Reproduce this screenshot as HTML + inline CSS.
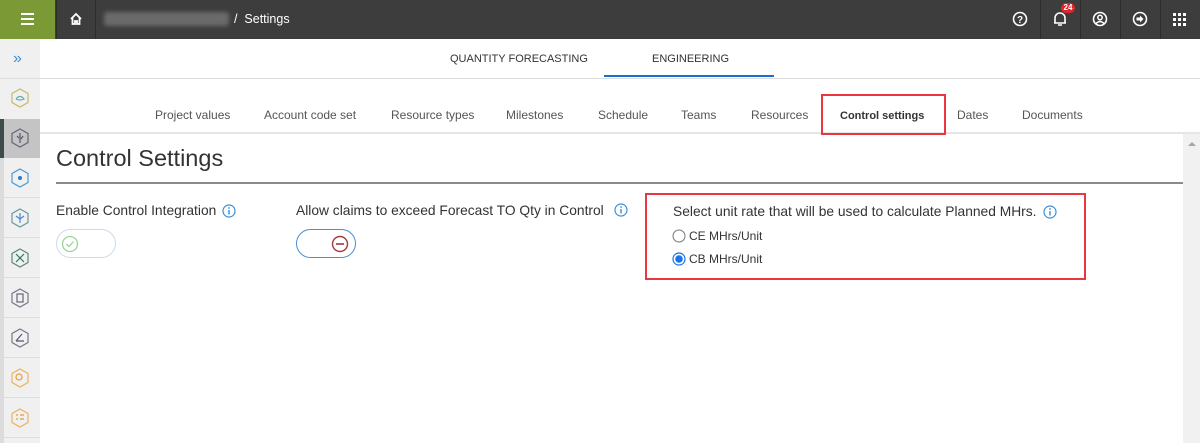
<!DOCTYPE html>
<html><head><style>
*{margin:0;padding:0;box-sizing:border-box}
body{width:1200px;height:443px;overflow:hidden;background:#fff;font-family:"Liberation Sans",Arial,sans-serif;position:relative}
.a{position:absolute}
.top{left:0;top:0;width:1200px;height:39px;background:#3d3d3d}
.t{color:#444;font-size:12px;white-space:nowrap}
.tab{top:108px;font-size:12px;color:#555}
</style></head><body>
<div class="a top"></div>
<div class="a" style="left:0;top:0;width:55px;height:39px;background:#7b9a36"></div>
<div class="a" style="left:21px;top:13px;width:13px;height:2px;background:#fff;box-shadow:0 5px #fff,0 10px #fff"></div>
<div class="a" style="left:56px;top:0;width:40px;height:39px;border-left:1px solid #2c2c2c;border-right:1px solid #2c2c2c"></div>
<svg class="a" style="left:69px;top:12px" width="14" height="14" viewBox="0 0 14 14"><path d="M2 7 L7 2 L12 7 M3.5 6 V12 H6 V9 H8 V12 H10.5 V6" fill="none" stroke="#fff" stroke-width="1.8"/></svg>
<div class="a" style="left:104px;top:12px;width:125px;height:14px;background:#6a6a6a;border-radius:3px;filter:blur(2px)"></div>
<div class="a" style="left:234px;top:12px;color:#fff;font-size:12.5px">/&nbsp;&nbsp;Settings</div>
<div class="a" style="left:1040px;top:0;width:1px;height:39px;background:#2c2c2c;box-shadow:40px 0 #2c2c2c,80px 0 #2c2c2c,120px 0 #2c2c2c"></div>
<svg class="a" style="left:1012px;top:11px" width="16" height="16"><circle cx="8" cy="8" r="6.5" fill="none" stroke="#fff" stroke-width="1.6"/><text x="8" y="12" font-size="10" font-weight="bold" fill="#fff" text-anchor="middle" font-family="Liberation Sans">?</text></svg>
<svg class="a" style="left:1052px;top:10px" width="16" height="18"><path d="M3 13 V8 A5 5 0 0 1 13 8 V13 H2 H14 M6 15 H10" fill="none" stroke="#fff" stroke-width="1.6"/></svg>
<div class="a" style="left:1061px;top:3px;width:14px;height:10px;background:#e5222a;border-radius:5px;color:#fff;font-size:8px;font-weight:bold;text-align:center;line-height:10px">24</div>
<svg class="a" style="left:1092px;top:11px" width="16" height="16"><circle cx="8" cy="8" r="6.5" fill="none" stroke="#fff" stroke-width="1.6"/><circle cx="8" cy="6.5" r="2.2" fill="none" stroke="#fff" stroke-width="1.5"/><path d="M4 12.5 Q8 8.5 12 12.5" fill="none" stroke="#fff" stroke-width="1.5"/></svg>
<svg class="a" style="left:1132px;top:11px" width="16" height="16"><circle cx="8" cy="8" r="6.5" fill="none" stroke="#fff" stroke-width="1.6"/><path d="M4.5 6.5 H8 V4.5 L11.5 8 L8 11.5 V9.5 H4.5Z" fill="#fff"/></svg>
<svg class="a" style="left:1173px;top:13px" width="13" height="13" fill="#fff"><rect x="0" y="0" width="3" height="3"/><rect x="5" y="0" width="3" height="3"/><rect x="10" y="0" width="3" height="3"/><rect x="0" y="5" width="3" height="3"/><rect x="5" y="5" width="3" height="3"/><rect x="10" y="5" width="3" height="3"/><rect x="0" y="10" width="3" height="3"/><rect x="5" y="10" width="3" height="3"/><rect x="10" y="10" width="3" height="3"/></svg>

<div class="a" style="left:0;top:39px;width:40px;height:404px;background:#f0f0f0"></div>
<div class="a" style="left:0;top:119px;width:4px;height:324px;background:#dcdcdc"></div>
<div class="a t" style="left:13px;top:50px;color:#3b8fd8;font-size:16px">»</div>
<div class="a" style="left:0;top:78px;width:40px;height:1px;background:#ddd"></div>
<div class="a" style="left:0;top:119px;width:40px;height:39px;background:#c4c4c4"></div>
<div class="a" style="left:0;top:119px;width:4px;height:39px;background:#3e4b4b"></div>
<svg class="a" style="left:0;top:79px" width="40" height="364">
<g fill="none" stroke-width="1.2">
<path d="M20 10 L28 14.5 V23.5 L20 28 L12 23.5 V14.5Z" stroke="#c8b86a"/><path d="M16 20 Q20 15 24 20 Q20 22 16 20" stroke="#6aa"/>
<path d="M20 50 L28 54.5 V63.5 L20 68 L12 63.5 V54.5Z" stroke="#667"/><path d="M20 54 V64 M17 57 L19 59 M23 57 L21 60" stroke="#557"/>
<path d="M20 90 L28 94.5 V103.5 L20 108 L12 103.5 V94.5Z" stroke="#4a9ad8"/><circle cx="20" cy="99" r="2" fill="#2a7ac8" stroke="none"/>
<path d="M20 130 L28 134.5 V143.5 L20 148 L12 143.5 V134.5Z" stroke="#6a9a9a"/><path d="M20 134 V144 M16 137 L20 140 L24 137" stroke="#4a8ac8"/>
<path d="M20 170 L28 174.5 V183.5 L20 188 L12 183.5 V174.5Z" stroke="#5a8a7a"/><path d="M16 175 L24 183 M24 175 L16 183" stroke="#2a7a5a"/>
<path d="M20 210 L28 214.5 V223.5 L20 228 L12 223.5 V214.5Z" stroke="#778"/><rect x="17" y="215" width="6" height="8" stroke="#667"/>
<path d="M20 250 L28 254.5 V263.5 L20 268 L12 263.5 V254.5Z" stroke="#778"/><path d="M16 262 H24 M16 262 L22 255" stroke="#557"/>
<path d="M20 290 L28 294.5 V303.5 L20 308 L12 303.5 V294.5Z" stroke="#f0b060"/><circle cx="19" cy="298" r="3" stroke="#e89a40"/>
<path d="M20 330 L28 334.5 V343.5 L20 348 L12 343.5 V334.5Z" stroke="#f0b060"/><path d="M16 336 H18 M16 340 H18 M20 336 H24 M20 340 H24" stroke="#e89a40"/>
</g>
<g fill="#ddd"><rect x="4" y="118" width="36" height="1"/><rect x="4" y="158" width="36" height="1"/><rect x="4" y="198" width="36" height="1"/><rect x="4" y="238" width="36" height="1"/><rect x="4" y="278" width="36" height="1"/><rect x="4" y="318" width="36" height="1"/><rect x="4" y="358" width="36" height="1"/></g>
</svg>

<div class="a t" style="left:450px;top:53px;color:#333;font-size:11px">QUANTITY FORECASTING</div>
<div class="a t" style="left:652px;top:53px;color:#333;font-size:11px">ENGINEERING</div>
<div class="a" style="left:604px;top:75px;width:170px;height:2px;background:#1a6fc9"></div>
<div class="a" style="left:40px;top:78px;width:1160px;height:1px;background:#ddd"></div>
<div class="a tab" style="left:155px">Project values</div>
<div class="a tab" style="left:264px">Account code set</div>
<div class="a tab" style="left:391px">Resource types</div>
<div class="a tab" style="left:506px">Milestones</div>
<div class="a tab" style="left:598px">Schedule</div>
<div class="a tab" style="left:681px">Teams</div>
<div class="a tab" style="left:751px">Resources</div>
<div class="a tab" style="left:840px;top:110px;color:#333;font-weight:bold;font-size:11px">Control settings</div>
<div class="a tab" style="left:957px">Dates</div>
<div class="a tab" style="left:1022px">Documents</div>
<div class="a" style="left:40px;top:132px;width:1160px;height:2px;background:#e6e6e6"></div>
<div class="a" style="left:821px;top:94px;width:125px;height:41px;border:2px solid #e8373e"></div>
<div class="a" style="left:1183px;top:134px;width:17px;height:309px;background:#f1f1f1"></div>
<div class="a" style="left:1188px;top:142px;width:0;height:0;border-left:4px solid transparent;border-right:4px solid transparent;border-bottom:4px solid #a3a3a3"></div>

<div class="a" style="left:56px;top:145px;font-size:23.5px;color:#333">Control Settings</div>
<div class="a" style="left:56px;top:182px;width:1127px;height:2px;background:#8a8a8a"></div>

<div class="a" style="left:56px;top:203px;font-size:13.8px;color:#333">Enable Control Integration</div>
<svg class="a" style="left:222px;top:204px" width="14" height="14"><circle cx="7" cy="7" r="6" fill="none" stroke="#3a8fd8" stroke-width="1.2"/><rect x="6.3" y="6" width="1.4" height="4.5" fill="#3a8fd8"/><circle cx="7" cy="4" r="0.9" fill="#3a8fd8"/></svg>
<div class="a" style="left:56px;top:229px;width:60px;height:29px;border:1.5px solid #c8dcf0;border-radius:15px"></div>
<svg class="a" style="left:61px;top:235px" width="18" height="18"><circle cx="9" cy="9" r="7.5" fill="none" stroke="#9ad49a" stroke-width="1.3"/><path d="M5.5 9 L8 11.5 L12.5 6.5" fill="none" stroke="#9ad49a" stroke-width="1.3"/></svg>

<div class="a" style="left:296px;top:203px;font-size:13.8px;color:#333">Allow claims to exceed Forecast TO Qty in Control</div>
<svg class="a" style="left:614px;top:203px" width="14" height="14"><circle cx="7" cy="7" r="6" fill="none" stroke="#3a8fd8" stroke-width="1.2"/><rect x="6.3" y="6" width="1.4" height="4.5" fill="#3a8fd8"/><circle cx="7" cy="4" r="0.9" fill="#3a8fd8"/></svg>
<div class="a" style="left:296px;top:229px;width:60px;height:29px;border:1.5px solid #4a8ed8;border-radius:15px"></div>
<svg class="a" style="left:331px;top:235px" width="18" height="18"><circle cx="9" cy="9" r="7.5" fill="none" stroke="#a23a3a" stroke-width="1.4"/><rect x="5" y="8.2" width="8" height="1.6" fill="#a23a3a"/></svg>

<div class="a" style="left:645px;top:193px;width:441px;height:87px;border:2px solid #e8373e"></div>
<div class="a" style="left:673px;top:204px;font-size:13.8px;color:#333">Select unit rate that will be used to calculate Planned MHrs.</div>
<svg class="a" style="left:1043px;top:205px" width="14" height="14"><circle cx="7" cy="7" r="6" fill="none" stroke="#3a8fd8" stroke-width="1.2"/><rect x="6.3" y="6" width="1.4" height="4.5" fill="#3a8fd8"/><circle cx="7" cy="4" r="0.9" fill="#3a8fd8"/></svg>
<svg class="a" style="left:672px;top:229px" width="14" height="14"><circle cx="7" cy="7" r="6" fill="#fff" stroke="#777" stroke-width="1"/></svg>
<div class="a" style="left:689px;top:229px;font-size:12px;color:#333">CE MHrs/Unit</div>
<svg class="a" style="left:672px;top:252px" width="14" height="14"><circle cx="7" cy="7" r="6" fill="#fff" stroke="#1a73e8" stroke-width="1.2"/><circle cx="7" cy="7" r="3.8" fill="#1a73e8"/></svg>
<div class="a" style="left:689px;top:252px;font-size:12px;color:#333">CB MHrs/Unit</div>
</body></html>
